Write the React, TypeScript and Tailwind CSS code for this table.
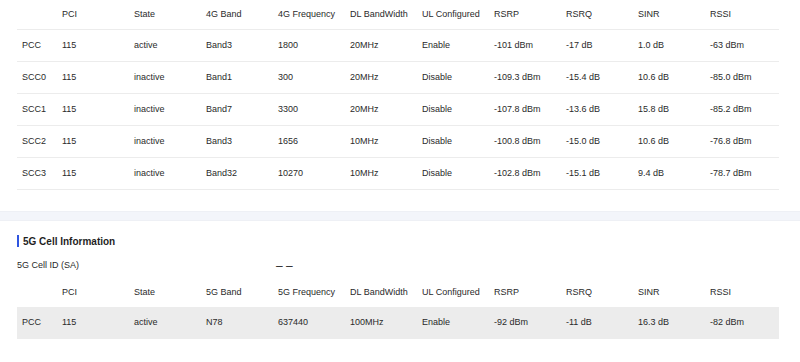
import React from "react";

const cols = "grid grid-cols-[40px_repeat(9,72px)_74px] items-center";

const rows4g = [
  ["PCC", "115", "active", "Band3", "1800", "20MHz", "Enable", "-101 dBm", "-17 dB", "1.0 dB", "-63 dBm"],
  ["SCC0", "115", "inactive", "Band1", "300", "20MHz", "Disable", "-109.3 dBm", "-15.4 dB", "10.6 dB", "-85.0 dBm"],
  ["SCC1", "115", "inactive", "Band7", "3300", "20MHz", "Disable", "-107.8 dBm", "-13.6 dB", "15.8 dB", "-85.2 dBm"],
  ["SCC2", "115", "inactive", "Band3", "1656", "10MHz", "Disable", "-100.8 dBm", "-15.0 dB", "10.6 dB", "-76.8 dBm"],
  ["SCC3", "115", "inactive", "Band32", "10270", "10MHz", "Disable", "-102.8 dBm", "-15.1 dB", "9.4 dB", "-78.7 dBm"],
];

const head4g = ["", "PCI", "State", "4G Band", "4G Frequency", "DL BandWidth", "UL Configured", "RSRP", "RSRQ", "SINR", "RSSI"];
const head5g = ["", "PCI", "State", "5G Band", "5G Frequency", "DL BandWidth", "UL Configured", "RSRP", "RSRQ", "SINR", "RSSI"];
const row5g = ["PCC", "115", "active", "N78", "637440", "100MHz", "Enable", "-92 dBm", "-11 dB", "16.3 dB", "-82 dBm"];

function Cells({ data }: { data: string[] }) {
  return (
    <>
      {data.map((c, i) => (
        <div key={i} className="pl-[5px] whitespace-nowrap">
          {c}
        </div>
      ))}
    </>
  );
}

export default function App() {
  return (
    <div
      className="w-[800px] h-[362px] bg-white text-[#2a2a2a] text-[9px] overflow-hidden"
      style={{ fontFamily: '"Liberation Sans", Arial, sans-serif' }}
    >
      <div className="pl-[17px]">
        <div className="w-[762px]">
          <div className={`${cols} h-[30px] border-b border-[#ececec]`}>
            <Cells data={head4g} />
          </div>
          {rows4g.map((r, i) => (
            <div key={i} className={`${cols} h-[32px] border-b border-[#ececec]`}>
              <Cells data={r} />
            </div>
          ))}
        </div>
      </div>
      <div className="h-[21px]" />
      <div className="h-[10px] bg-[#f3f5fa] border-y border-[#eef0f5]" />
      <div className="pl-[17px]">
        <div className="h-[14px]" />
        <div className="flex items-center h-[12px] gap-[4px]">
          <div className="w-[2px] h-[12px] bg-[#2f55e0]" />
          <div className="font-bold text-[10px] text-[#1f1f1f]">5G Cell Information</div>
        </div>
        <div className="flex items-center h-[24px] mt-[7px]">
          <div className="w-[259px]">5G Cell ID (SA)</div>
          <div className="text-[12px] leading-none">– –</div>
        </div>
        <div className="w-[762px]">
          <div className={`${cols} h-[29px] pt-[1px]`}>
            <Cells data={head5g} />
          </div>
          <div className={`${cols} h-[32px] bg-[#ececec]`}>
            <Cells data={row5g} />
          </div>
        </div>
      </div>
    </div>
  );
}
